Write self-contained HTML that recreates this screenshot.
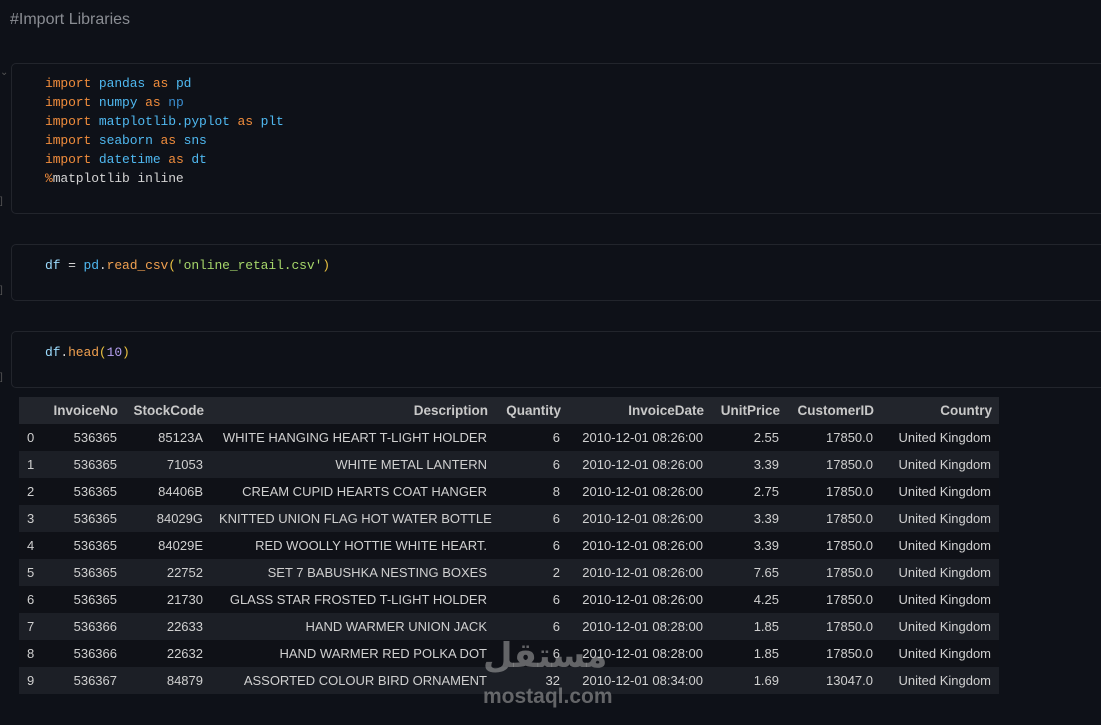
<!DOCTYPE html>
<html><head><meta charset="utf-8"><style>
*{margin:0;padding:0;box-sizing:border-box}
body{width:1101px;height:725px;background:#0e1118;position:relative;overflow:hidden;font-family:"Liberation Sans",sans-serif;color:#c8c8c8}
.md{position:absolute;left:10px;top:11px;font-size:16px;color:#8a8d93}
.cell{position:absolute;left:11px;right:-10px;border:1px solid #22252c;border-radius:5px}
.code{position:absolute;left:45px;font-family:"Liberation Mono","DejaVu Sans Mono",monospace;font-size:13px;line-height:19px;white-space:pre;color:#d4d4d4;letter-spacing:-0.1px}
.k{color:#f08c3c}.m{color:#4fb8f0}.n{color:#3b8ed0}.v{color:#9cdcfe}.s{color:#a6d66a}.f{color:#f0a050}.p{color:#e8c040}.num{color:#b5a0f0}
.br{position:absolute;left:0;font-size:10px;color:#555}
table{position:absolute;left:19px;top:397px;border-collapse:collapse;font-size:13px;color:#d0d0d0;table-layout:fixed;width:980px}
td,th{height:27px;padding:0 8px;text-align:right;white-space:nowrap;overflow:visible}
th{font-weight:bold;background:#22252c;color:#c8c8c8;font-size:13.5px;padding:0 7px 0 0}
tr:nth-child(even) td{background:#0f1117}
tr:nth-child(odd) td{background:#1c1f26}
td:first-child,th:first-child{text-align:left}
.wm{position:absolute;left:483px;color:rgba(170,170,170,.55);font-weight:bold}
</style></head><body>
<div class="md">#Import Libraries</div>
<div class="cell" style="top:63px;height:151px"></div>
<div class="br" style="top:67px">⌄</div>
<div class="br" style="top:196px">]</div>
<div class="code" style="top:74px"><span class="k">import</span> <span class="m">pandas</span> <span class="k">as</span> <span class="m">pd</span>
<span class="k">import</span> <span class="m">numpy</span> <span class="k">as</span> <span class="n">np</span>
<span class="k">import</span> <span class="m">matplotlib.pyplot</span> <span class="k">as</span> <span class="m">plt</span>
<span class="k">import</span> <span class="m">seaborn</span> <span class="k">as</span> <span class="m">sns</span>
<span class="k">import</span> <span class="m">datetime</span> <span class="k">as</span> <span class="m">dt</span>
<span class="k">%</span>matplotlib inline</div>
<div class="cell" style="top:244px;height:57px"></div>
<div class="br" style="top:285px">]</div>
<div class="code" style="top:256px"><span class="v">df</span> = <span class="m">pd</span>.<span class="f">read_csv</span><span class="p">(</span><span class="s">'online_retail.csv'</span><span class="p">)</span></div>
<div class="cell" style="top:331px;height:57px"></div>
<div class="br" style="top:372px">]</div>
<div class="code" style="top:343px"><span class="v">df</span>.<span class="f">head</span><span class="p">(</span><span class="num">10</span><span class="p">)</span></div>
<table>
<colgroup><col style="width:23px"><col style="width:83px"><col style="width:86px"><col style="width:284px"><col style="width:73px"><col style="width:143px"><col style="width:76px"><col style="width:94px"><col style="width:118px"></colgroup>
<tr><th></th><th>InvoiceNo</th><th>StockCode</th><th>Description</th><th>Quantity</th><th>InvoiceDate</th><th>UnitPrice</th><th>CustomerID</th><th>Country</th></tr>
<tr><td>0</td><td>536365</td><td>85123A</td><td>WHITE HANGING HEART T-LIGHT HOLDER</td><td>6</td><td>2010-12-01 08:26:00</td><td>2.55</td><td>17850.0</td><td>United Kingdom</td></tr>
<tr><td>1</td><td>536365</td><td>71053</td><td>WHITE METAL LANTERN</td><td>6</td><td>2010-12-01 08:26:00</td><td>3.39</td><td>17850.0</td><td>United Kingdom</td></tr>
<tr><td>2</td><td>536365</td><td>84406B</td><td>CREAM CUPID HEARTS COAT HANGER</td><td>8</td><td>2010-12-01 08:26:00</td><td>2.75</td><td>17850.0</td><td>United Kingdom</td></tr>
<tr><td>3</td><td>536365</td><td>84029G</td><td>KNITTED UNION FLAG HOT WATER BOTTLE</td><td>6</td><td>2010-12-01 08:26:00</td><td>3.39</td><td>17850.0</td><td>United Kingdom</td></tr>
<tr><td>4</td><td>536365</td><td>84029E</td><td>RED WOOLLY HOTTIE WHITE HEART.</td><td>6</td><td>2010-12-01 08:26:00</td><td>3.39</td><td>17850.0</td><td>United Kingdom</td></tr>
<tr><td>5</td><td>536365</td><td>22752</td><td>SET 7 BABUSHKA NESTING BOXES</td><td>2</td><td>2010-12-01 08:26:00</td><td>7.65</td><td>17850.0</td><td>United Kingdom</td></tr>
<tr><td>6</td><td>536365</td><td>21730</td><td>GLASS STAR FROSTED T-LIGHT HOLDER</td><td>6</td><td>2010-12-01 08:26:00</td><td>4.25</td><td>17850.0</td><td>United Kingdom</td></tr>
<tr><td>7</td><td>536366</td><td>22633</td><td>HAND WARMER UNION JACK</td><td>6</td><td>2010-12-01 08:28:00</td><td>1.85</td><td>17850.0</td><td>United Kingdom</td></tr>
<tr><td>8</td><td>536366</td><td>22632</td><td>HAND WARMER RED POLKA DOT</td><td>6</td><td>2010-12-01 08:28:00</td><td>1.85</td><td>17850.0</td><td>United Kingdom</td></tr>
<tr><td>9</td><td>536367</td><td>84879</td><td>ASSORTED COLOUR BIRD ORNAMENT</td><td>32</td><td>2010-12-01 08:34:00</td><td>1.69</td><td>13047.0</td><td>United Kingdom</td></tr>
</table>
<div class="wm" style="top:636px;font-family:'DejaVu Sans',sans-serif;font-size:34px">مستقل</div>
<div class="wm" style="top:685px;font-size:21px">mostaql.com</div>
</body></html>
